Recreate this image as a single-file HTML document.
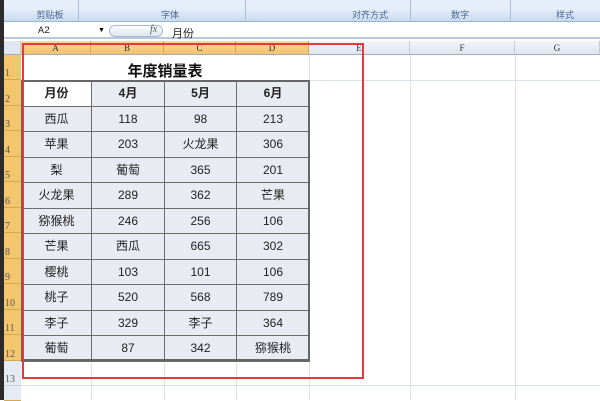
<!DOCTYPE html><html><head><meta charset="utf-8"><style>
*{margin:0;padding:0;box-sizing:border-box}
body{width:600px;height:400px;overflow:hidden;background:#fff;position:relative;font-family:"Liberation Sans","Noto Sans CJK SC",sans-serif}
.a{position:absolute}
.rib{left:0;top:0;width:600px;height:22px;background:linear-gradient(#e6eef9 0,#e6eef9 40%,#c9dbf0 100%);border-bottom:1px solid #9ab3d3}
.rl{top:8px;font-size:9px;color:#4a6690;text-align:center}
.sep{top:0;width:1px;height:22px;background:#a9c0dd}
.fb{left:0;top:23px;width:600px;height:16px;background:#fff;border-bottom:2px solid #b7c9e0}
.ch{top:41px;height:14px;background:linear-gradient(#f2f5fa,#dfe6ef);border-right:1px solid #c5cfdc;border-bottom:1px solid #9eb0c7;font-size:9px;color:#333;text-align:center;line-height:14px;font-family:"Liberation Serif",serif}
.ch.s{background:linear-gradient(#f9d99b,#f3c26c);border-right-color:#d9a64c}
.rh{left:4px;width:17px;background:#f3c66e;border-bottom:1px solid #d9a64c;font-size:10px;color:#555;padding-left:1px;display:flex;align-items:flex-end;font-family:"Liberation Serif",serif}
.gl{background:#dde3ea}
table{position:absolute;left:21px;top:80px;border-collapse:collapse}
td{border:1px solid #6d6d6d;background:#e9ebf3;text-align:center;font-size:12px;color:#222;height:25.5px;padding:0;line-height:14px}
tr:first-child td{font-weight:bold;font-size:12px}
</style></head><body>
<div class="a rib"></div>
<div class="a rl" style="left:20px;width:60px">剪贴板</div>
<div class="a rl" style="left:140px;width:60px">字体</div>
<div class="a rl" style="left:340px;width:60px">对齐方式</div>
<div class="a rl" style="left:430px;width:60px">数字</div>
<div class="a rl" style="left:535px;width:60px">样式</div>
<div class="a sep" style="left:78px"></div><div class="a sep" style="left:245px"></div><div class="a sep" style="left:410px"></div><div class="a sep" style="left:510px"></div>
<div class="a fb"></div>
<div class="a" style="left:0;top:0;width:4px;height:400px;background:#2b2b2b"></div>
<div class="a" style="left:38px;top:26px;font-size:10px;color:#222;font-family:'Liberation Mono',monospace">A2</div>
<div class="a" style="left:98px;top:27px;font-size:7px">▼</div>
<div class="a" style="left:109px;top:25px;width:54px;height:12px;border:1px solid #a8b8cc;border-radius:7px;background:linear-gradient(#fff,#dbe5f1)"></div>
<div class="a" style="left:150px;top:24px;font-size:10px;font-style:italic;font-family:'Liberation Serif',serif;color:#555">fx</div>
<div class="a" style="left:172px;top:25px;font-size:11px;color:#222">月份</div>
<div class="a ch" style="left:4px;width:17px;background:#dfe6ef"></div>
<div class="a ch s" style="left:21px;width:70px">A</div>
<div class="a ch s" style="left:91px;width:73px">B</div>
<div class="a ch s" style="left:164px;width:72px">C</div>
<div class="a ch s" style="left:236px;width:73px">D</div>
<div class="a ch" style="left:309px;width:101px">E</div>
<div class="a ch" style="left:410px;width:105px">F</div>
<div class="a ch" style="left:515px;width:85px">G</div>
<div class="a gl" style="left:309px;top:55px;width:1px;height:345px"></div>
<div class="a gl" style="left:410px;top:55px;width:1px;height:345px"></div>
<div class="a gl" style="left:515px;top:55px;width:1px;height:345px"></div>
<div class="a gl" style="left:91px;top:360px;width:1px;height:40px"></div>
<div class="a gl" style="left:164px;top:360px;width:1px;height:40px"></div>
<div class="a gl" style="left:236px;top:360px;width:1px;height:40px"></div>
<div class="a gl" style="left:21px;top:80px;width:579px;height:1px"></div>
<div class="a gl" style="left:21px;top:385px;width:579px;height:1px"></div>
<div class="a rh" style="top:55px;height:25px">1</div>
<div class="a rh" style="top:80px;height:25.5px">2</div>
<div class="a rh" style="top:105.5px;height:25.5px">3</div>
<div class="a rh" style="top:131px;height:25.5px">4</div>
<div class="a rh" style="top:156.5px;height:25.5px">5</div>
<div class="a rh" style="top:182px;height:25.5px">6</div>
<div class="a rh" style="top:207.5px;height:25.5px">7</div>
<div class="a rh" style="top:233px;height:25.5px">8</div>
<div class="a rh" style="top:258.5px;height:25.5px">9</div>
<div class="a rh" style="top:284px;height:25.5px">10</div>
<div class="a rh" style="top:309.5px;height:25.5px">11</div>
<div class="a rh" style="top:335px;height:25.5px">12</div>
<div class="a rh" style="top:360.5px;height:25px;background:#e4ebf3;border-bottom-color:#c5cfdc">13</div>
<div class="a rh" style="top:385.5px;height:15px;background:#e4ebf3"></div>
<div class="a" style="left:21px;top:60px;width:288px;text-align:center;font-size:15px;font-weight:bold;color:#111">年度销量表</div>
<table>
<tr><td style="width:70px;background:#fff">月份</td><td style="width:73px">4月</td><td style="width:72px">5月</td><td style="width:73px">6月</td></tr>
<tr><td>西瓜</td><td>118</td><td>98</td><td>213</td></tr>
<tr><td>苹果</td><td>203</td><td>火龙果</td><td>306</td></tr>
<tr><td>梨</td><td>葡萄</td><td>365</td><td>201</td></tr>
<tr><td>火龙果</td><td>289</td><td>362</td><td>芒果</td></tr>
<tr><td>猕猴桃</td><td>246</td><td>256</td><td>106</td></tr>
<tr><td>芒果</td><td>西瓜</td><td>665</td><td>302</td></tr>
<tr><td>樱桃</td><td>103</td><td>101</td><td>106</td></tr>
<tr><td>桃子</td><td>520</td><td>568</td><td>789</td></tr>
<tr><td>李子</td><td>329</td><td>李子</td><td>364</td></tr>
<tr><td>葡萄</td><td>87</td><td>342</td><td>猕猴桃</td></tr>
</table>
<div class="a" style="left:21px;top:80px;width:289px;height:281px;border:2px solid #666"></div>
<div class="a" style="left:22px;top:43px;width:342px;height:336px;border:2px solid #e8383d"></div>
</body></html>
